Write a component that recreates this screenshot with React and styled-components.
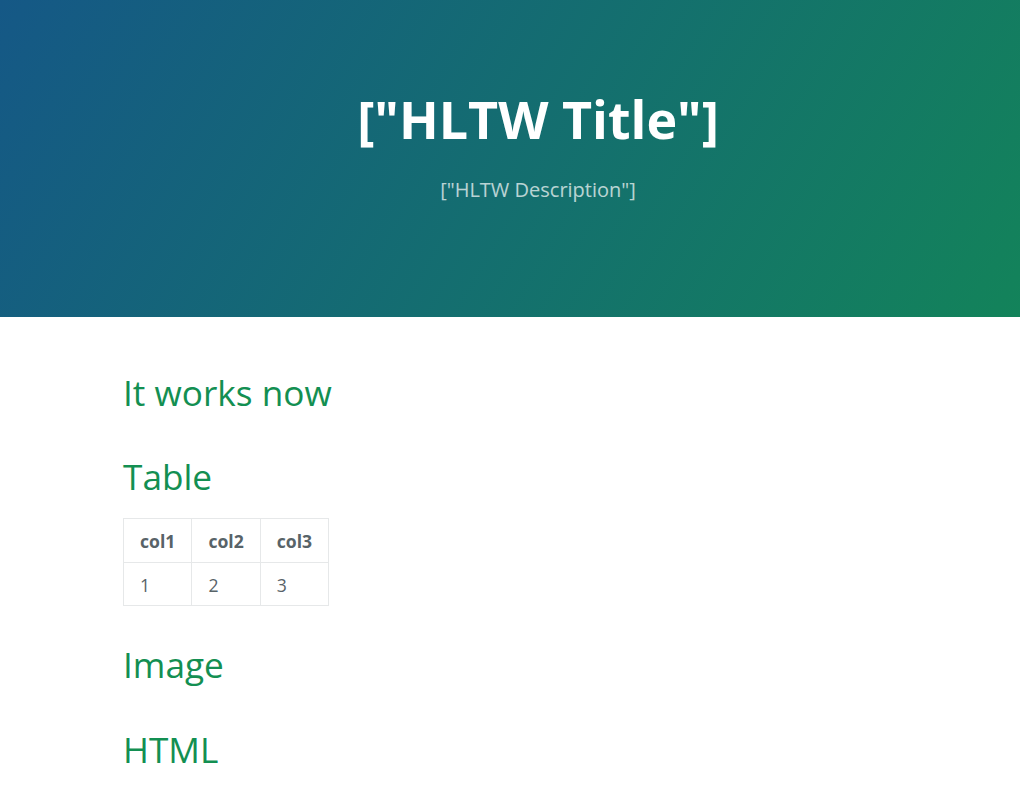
import React from 'react';
import styled, { createGlobalStyle } from 'styled-components';

const Global = createGlobalStyle`
    html, body {
        margin: 0;
        padding: 0;
        background: #fff;
    }
    body {
        font-family: "Open Sans", "Helvetica Neue", Arial, sans-serif;
        line-height: 1.5;
        color: #586368;
    }
`

const PageHeader = styled.section`
    color: #fff;
    text-align: center;
    background-color: #155a84;
    background-image: linear-gradient(120deg, #155886, #13835a);
    padding: 80px 96px 80px 152px;
`

const ProjectName = styled.h1`
    margin: 0 0 1.6px;
    font-size: 52px;
    font-weight: 700;
    line-height: 1.5;
`

const Tagline = styled.h2`
    margin: 16.6px 0 32px;
    font-size: 20px;
    font-weight: normal;
    line-height: 1.5;
    opacity: 0.7;
`

const MainContent = styled.section`
    max-width: 1024px;
    padding: 49px 96px 32px 123px;
    font-size: 17.6px;
    word-wrap: break-word;
`

const Heading = styled.h1`
    margin: ${p => (p.$first ? '0' : '32px')} 0 16px;
    font-size: 35.2px;
    font-weight: normal;
    line-height: 1.5;
    color: #138f52;
`

const Table = styled.table`
    display: block;
    width: 100%;
    overflow: auto;
    margin: -1px 0 16px;
    border-collapse: collapse;
    border-spacing: 0;
    font-size: 17.6px;

    th {
        font-weight: bold;
    }

    th, td {
        padding: 9px 16px 7px;
        border: 1px solid #e6e8e9;
        text-align: left;
        line-height: 26.4px;
    }
`

export default function App() {
    return (
        <>
            <Global />
            <PageHeader>
                <ProjectName>["HLTW Title"]</ProjectName>
                <Tagline>["HLTW Description"]</Tagline>
            </PageHeader>
            <MainContent>
                <Heading $first>It works now</Heading>
                <Heading>Table</Heading>
                <Table>
                    <thead>
                        <tr>
                            <th>col1</th>
                            <th>col2</th>
                            <th>col3</th>
                        </tr>
                    </thead>
                    <tbody>
                        <tr>
                            <td>1</td>
                            <td>2</td>
                            <td>3</td>
                        </tr>
                    </tbody>
                </Table>
                <Heading>Image</Heading>
                <Heading>HTML</Heading>
            </MainContent>
        </>
    );
}
